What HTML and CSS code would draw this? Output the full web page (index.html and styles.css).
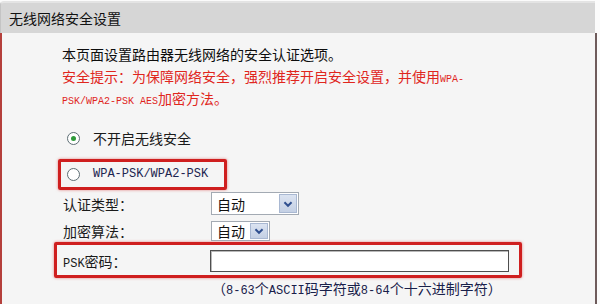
FILE: index.html
```html
<!DOCTYPE html>
<html lang="zh-CN">
<head>
<meta charset="utf-8">
<title>无线网络安全设置</title>
<link rel="stylesheet" href="styles.css">
</head>
<body>
<div class="panel">
  <div class="hd">无线网络安全设置</div>
  <div class="bd">
    <p class="intro">本页面设置路由器无线网络的安全认证选项。</p>
    <p class="warn">安全提示：为保障网络安全，强烈推荐开启安全设置，并使用<span class="m-sm">WPA-</span><br><span class="m-sm">PSK/WPA2-PSK AES</span>加密方法。</p>
    <div class="opt opt-first">
      <span class="radio on"></span><span class="opt-txt">不开启无线安全</span>
    </div>
    <div class="hl hl1">
      <div class="opt">
        <span class="radio"></span><span class="opt-txt m">WPA-PSK/WPA2-PSK</span>
      </div>
    </div>
    <div class="row row1">
      <span class="lbl">认证类型：</span>
      <div class="sel sel1"><span class="sel-txt">自动</span><span class="sel-btn"><svg viewBox="0 0 18 18" width="16" height="16"><path d="M5 7 L9 11 L13 7" fill="none" stroke="#2f4f8f" stroke-width="2.2"/></svg></span></div>
    </div>
    <div class="row row2">
      <span class="lbl">加密算法：</span>
      <div class="sel sel2"><span class="sel-txt">自动</span><span class="sel-btn"><svg viewBox="0 0 18 18" width="16" height="16"><path d="M5 7 L9 11 L13 7" fill="none" stroke="#2f4f8f" stroke-width="2.2"/></svg></span></div>
    </div>
    <div class="hl hl2">
      <div class="row">
        <span class="lbl lbl-in"><span class="m">PSK</span>密码：</span>
        <div class="inp"></div>
      </div>
    </div>
    <div class="help">（<span class="m">8-63</span>个<span class="m">ASCII</span>码字符或<span class="m">8-64</span>个十六进制字符）</div>
  </div>
</div>
</body>
</html>
```
FILE: styles.css
```css
html, body {
  margin: 0;
  padding: 0;
  background: #fbfbfb;
}
body {
  font-family: "Noto Sans CJK SC", "Noto Sans", sans-serif;
  font-size: 14px;
  color: #151515;
  width: 600px;
  height: 304px;
  overflow: hidden;
}
.panel {
  width: 597px;
  height: 304px;
  display: flex;
  flex-direction: column;
  padding-top: 1px;
  box-sizing: border-box;
}
.hd {
  height: 32px;
  line-height: 30px;
  padding-left: 8px;
  background: #d6d6d6;
  border-top: 2px solid #e4e4e4;
  border-left: 1px solid #c4c4c4;
  border-radius: 4px 0 0 0;
  box-sizing: border-box;
  color: #111;
  width: 595px;
}
.bd {
  flex: 1;
  background: #f5f5f5;
  border-left: 2px solid #b5403c;
  border-right: 2px solid #6e5b5b;
  padding-top: 10px;
}
p {
  margin: 0;
}
.intro, .warn {
  margin-left: 60px;
  line-height: 22px;
  height: 22px;
  white-space: nowrap;
}
.warn {
  height: 44px;
  color: #e0261d;
}
.intro {
  color: #0d0d0d;
}
.m {
  font-family: "Liberation Mono", monospace;
  font-size: 12px;
  line-height: 1;
}
.m-sm {
  font-family: "Liberation Mono", monospace;
  font-size: 10px;
  line-height: 1;
}
.opt {
  display: flex;
  align-items: center;
  height: 24px;
}
.opt-first {
  margin-top: 17px;
  margin-left: 65px;
}
.radio {
  width: 11px;
  height: 11px;
  border: 1px solid #5d6d74;
  border-radius: 50%;
  background: #fff;
  position: relative;
  flex: none;
}
.radio.on::after {
  content: "";
  position: absolute;
  left: 3px;
  top: 3px;
  width: 5px;
  height: 5px;
  border-radius: 50%;
  background: #2f9a3a;
}
.opt-txt {
  margin-left: 13px;
  color: #1a1a1a;
}
.opt-txt.m {
  color: #1c2550;
}
.hl {
  border: 3px solid #cf1f1f;
  border-radius: 2px;
  box-shadow: 0 0 3px rgba(210, 30, 30, 0.55);
  box-sizing: border-box;
}
.hl1 {
  margin-top: 9px;
  margin-left: 56px;
  width: 169px;
  height: 31px;
  padding-left: 6px;
}
.row {
  display: flex;
  align-items: center;
}
.lbl {
  width: 147px;
  flex: none;
  padding-left: 61px;
  color: #1a1a1a;
}
.lbl-in {
  padding-left: 0;
}
.row1 {
  margin-top: 2px;
  height: 23px;
}
.row2 {
  margin-top: 6px;
  height: 20px;
}
.row1 .lbl, .row2 .lbl {
  width: 148px;
}
.sel {
  display: flex;
  align-items: center;
  background: #fff;
  border: 1px solid #a3aab3;
  box-sizing: border-box;
}
.sel1 {
  width: 88px;
  height: 23px;
}
.sel2 {
  width: 59px;
  height: 20px;
}
.sel-txt {
  flex: 1;
  padding-left: 5px;
  color: #111;
}
.sel-btn {
  display: flex;
  align-items: center;
  justify-content: center;
  width: 18px;
  align-self: stretch;
  margin: 1px;
  background: linear-gradient(#dbe3f1, #c4d0e4);
  border: 1px solid #a9b8d2;
  box-sizing: border-box;
}
.hl2 {
  margin-top: 1px;
  margin-left: 52px;
  width: 468px;
  padding: 5px 10px 3px 6px;
}
.inp {
  flex: 1;
  height: 22px;
  background: #fff;
  border: 1px solid #4e4e4e;
  box-shadow: inset 1px 1px 0 #b8b8b8;
  box-sizing: border-box;
}
.help {
  margin-top: 2px;
  margin-left: 210px;
  line-height: 16px;
  color: #18204a;
  white-space: nowrap;
}
```
